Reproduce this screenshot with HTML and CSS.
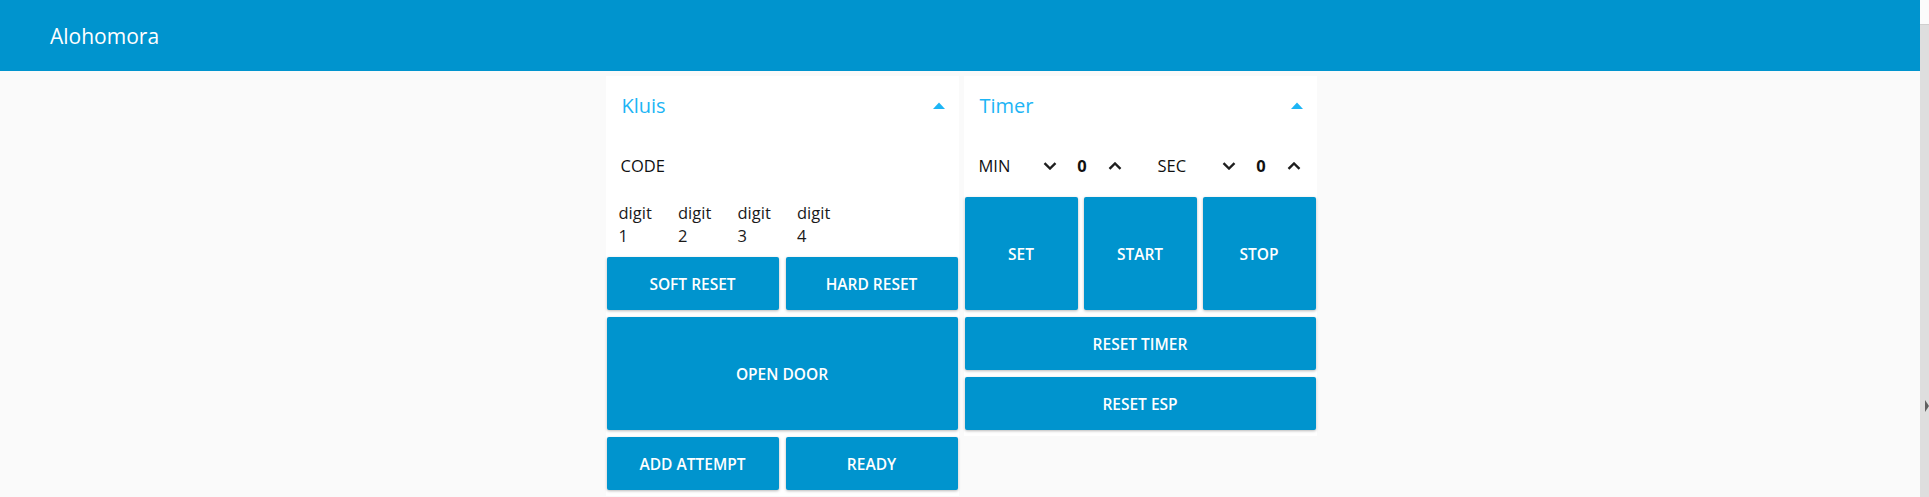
FILE: index.html
```html
<!DOCTYPE html>
<html lang="nl">
<head>
<meta charset="utf-8">
<title>Alohomora</title>
<link rel="stylesheet" href="styles.css">
</head>
<body>
<div class="app">
  <div class="main">
    <header class="toolbar"><span class="app-title">Alohomora</span></header>
    <div class="content">
      <section class="card">
        <div class="card-head">
          <span class="card-title">Kluis</span>
          <svg class="collapse" width="12" height="7" viewBox="0 0 12 7"><polygon points="0,7 6,0.5 12,7"/></svg>
        </div>
        <div class="card-body grid-2">
          <div class="text-row span-all">CODE</div>
          <div class="digits span-all">
            <div class="digit"><span>digit</span><span>1</span></div>
            <div class="digit"><span>digit</span><span>2</span></div>
            <div class="digit"><span>digit</span><span>3</span></div>
            <div class="digit"><span>digit</span><span>4</span></div>
          </div>
          <button class="btn">SOFT RESET</button>
          <button class="btn">HARD RESET</button>
          <button class="btn span-all tall">OPEN DOOR</button>
          <button class="btn">ADD ATTEMPT</button>
          <button class="btn">READY</button>
        </div>
      </section>
      <section class="card">
        <div class="card-head">
          <span class="card-title">Timer</span>
          <svg class="collapse" width="12" height="7" viewBox="0 0 12 7"><polygon points="0,7 6,0.5 12,7"/></svg>
        </div>
        <div class="card-body grid-3">
          <div class="numerics span-all">
            <div class="numeric">
              <span class="num-label">MIN</span>
              <span class="chev"><svg width="14" height="8" viewBox="0 0 14 8"><polyline points="1.5,1.2 7,6.5 12.5,1.2"/></svg></span>
              <span class="num-value">0</span>
              <span class="chev"><svg width="14" height="8" viewBox="0 0 14 8"><polyline points="1.5,6.8 7,1.5 12.5,6.8"/></svg></span>
            </div>
            <div class="numeric">
              <span class="num-label">SEC</span>
              <span class="chev"><svg width="14" height="8" viewBox="0 0 14 8"><polyline points="1.5,1.2 7,6.5 12.5,1.2"/></svg></span>
              <span class="num-value">0</span>
              <span class="chev"><svg width="14" height="8" viewBox="0 0 14 8"><polyline points="1.5,6.8 7,1.5 12.5,6.8"/></svg></span>
            </div>
          </div>
          <button class="btn tall">SET</button>
          <button class="btn tall">START</button>
          <button class="btn tall">STOP</button>
          <button class="btn span-all">RESET TIMER</button>
          <button class="btn span-all">RESET ESP</button>
        </div>
      </section>
    </div>
  </div>
  <div class="scroll-strip">
    <div class="strip-top"></div>
    <div class="strip-track"><span class="strip-arrow"></span></div>
  </div>
</div>
</body>
</html>
```
FILE: styles.css
```css
html, body {
  margin: 0;
  padding: 0;
  height: 100%;
  overflow: hidden;
  background: #fafafa;
  font-family: "Open Sans", "Noto Sans", sans-serif;
}

.app {
  display: flex;
  height: 497px;
}

.main {
  flex: 1;
  display: flex;
  flex-direction: column;
  min-width: 0;
}

.toolbar {
  height: 71px;
  flex: none;
  background: #0094ce;
  display: flex;
  align-items: center;
  padding-left: 50px;
}

.app-title {
  color: #ffffff;
  font-size: 21px;
}

.content {
  display: flex;
  justify-content: center;
  align-items: flex-start;
  gap: 5px;
  padding: 5px 0 0 2px;
}

.card {
  width: 353px;
  background: #ffffff;
  padding: 0 1px 6px 1px;
  box-sizing: border-box;
}

.card-head {
  height: 55px;
  display: flex;
  align-items: center;
  justify-content: space-between;
  padding: 3px 13px 0 15px;
  box-sizing: border-box;
}

.card-title {
  color: #1db5f5;
  font-size: 20px;
}

.collapse {
  fill: #1db5f5;
  display: block;
}

.card-body {
  display: grid;
  grid-auto-rows: 53px;
  row-gap: 7px;
  padding-top: 6px;
}

.grid-2 {
  grid-template-columns: 1fr 1fr;
  column-gap: 7px;
}

.grid-3 {
  grid-template-columns: 1fr 1fr 1fr;
  column-gap: 6px;
}

.span-all {
  grid-column: 1 / -1;
}

.tall {
  grid-row: span 2;
}

.text-row {
  display: flex;
  align-items: center;
  padding: 4px 0 0 14px;
  font-size: 16.5px;
  color: #111111;
}

.digits {
  display: flex;
  align-items: center;
  gap: 6.5px;
  padding-left: 12px;
}

.digit {
  width: 53px;
  display: flex;
  flex-direction: column;
  font-size: 16.5px;
  line-height: 23px;
  color: #1a1a1a;
}

.btn {
  border: none;
  margin: 0;
  background: #0094ce;
  color: #ffffff;
  font-family: inherit;
  font-size: 15.5px;
  font-weight: 600;
  border-radius: 2px;
  box-shadow: 0 1px 3px rgba(0, 0, 0, 0.28);
  cursor: pointer;
  padding: 0;
}

.numerics {
  display: flex;
  gap: 7px;
}

.numeric {
  flex: 1;
  display: flex;
  align-items: center;
  padding: 4px 10px 0 14px;
  font-size: 16.5px;
  color: #111111;
}

.num-label {
  flex: 1;
}

.chev {
  width: 24px;
  display: flex;
  justify-content: center;
}

.chev svg {
  display: block;
  fill: none;
  stroke: #1e1e1e;
  stroke-width: 2.4;
}

.num-value {
  width: 41px;
  text-align: center;
  font-weight: 700;
}

.scroll-strip {
  width: 9px;
  flex: none;
  display: flex;
  flex-direction: column;
}

.strip-top {
  height: 24px;
  background: #fbfbfb;
  border-bottom: 1px solid #cfcfcf;
}

.strip-track {
  flex: 1;
  background: #dedede;
  display: flex;
  flex-direction: column;
  align-items: flex-end;
  padding-top: 375px;
}

.strip-arrow {
  width: 0;
  height: 0;
  border-top: 6px solid transparent;
  border-bottom: 6px solid transparent;
  border-left: 4px solid #606060;
}
```
